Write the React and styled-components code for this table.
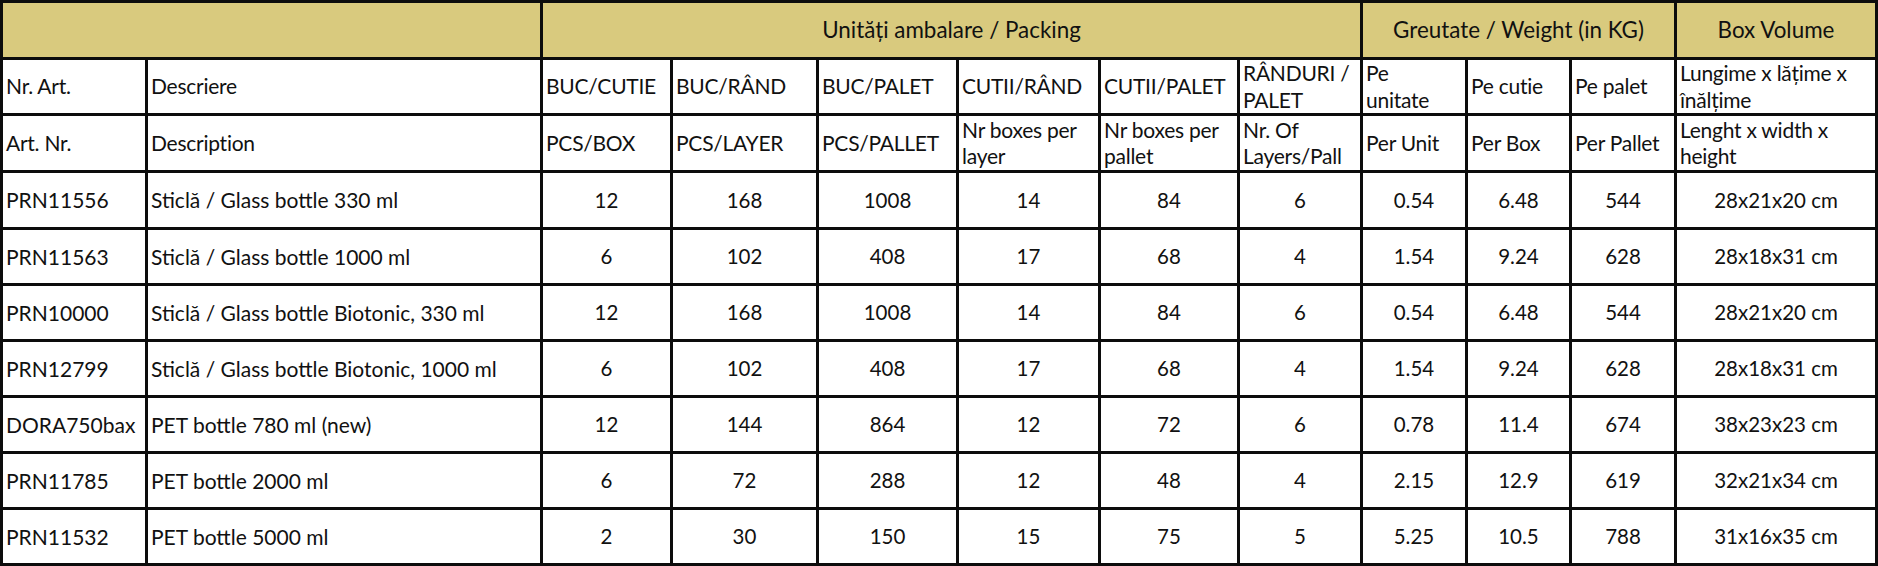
import React from "react";
import styled, { createGlobalStyle } from "styled-components";

const Global = createGlobalStyle`
  html, body { margin: 0; padding: 0; background: #fff; }
  #root { width: 1878px; }
`;

const Sheet = styled.div`
  box-sizing: border-box;
  width: 1878px;
  height: 566px;
  display: grid;
  grid-template-columns: 142px 392px 127px 143px 137px 139px 136px 120px 102px 101px 102px 198px;
  grid-template-rows: 54px 53px 54px 54px 53px 53px 53px 53px 53px 53px;
  gap: 3px;
  padding: 3px;
  background: #0c0c0c;
`;

const Cell = styled.div`
  grid-column: span ${(p) => p.$span || 1};
  background: ${(p) => (p.$band ? "#d9ca7e" : "#ffffff")};
  display: flex;
  align-items: center;
  justify-content: ${(p) => (p.$center ? "center" : "flex-start")};
  text-align: ${(p) => (p.$center ? "center" : "left")};
  padding: 0 ${(p) => (p.$center ? "0" : "3px")};
  overflow: hidden;
  white-space: nowrap;
  color: #111;
  font-family: "Lato", "Liberation Sans", sans-serif;
  font-size: ${(p) => (p.$body ? (p.$center ? "20.5px" : "21px") : "21px")};
  line-height: ${(p) => (p.$body ? 1.2 : 1.24)};
  letter-spacing: ${(p) => (p.$body ? "0" : "-0.25px")};
`;

const GroupCell = styled(Cell).attrs({ $band: true, $center: true })`
  font-size: 22.4px;
  letter-spacing: 0;
`;

const labelsRo = [
  "Nr. Art.",
  "Descriere",
  "BUC/CUTIE",
  "BUC/RÂND",
  "BUC/PALET",
  "CUTII/RÂND",
  "CUTII/PALET",
  ["RÂNDURI /", "PALET"],
  ["Pe", "unitate"],
  "Pe cutie",
  "Pe palet",
  ["Lungime x lățime x", "înălțime"],
];

const labelsEn = [
  "Art. Nr.",
  "Description",
  "PCS/BOX",
  "PCS/LAYER",
  "PCS/PALLET",
  ["Nr boxes per", "layer"],
  ["Nr boxes per", "pallet"],
  ["Nr. Of", "Layers/Pall"],
  "Per Unit",
  "Per Box",
  "Per Pallet",
  ["Lenght x width x", "height"],
];

const rows = [
  ["PRN11556", "Sticlă / Glass bottle 330 ml", "12", "168", "1008", "14", "84", "6", "0.54", "6.48", "544", "28x21x20 cm"],
  ["PRN11563", "Sticlă / Glass bottle 1000 ml", "6", "102", "408", "17", "68", "4", "1.54", "9.24", "628", "28x18x31 cm"],
  ["PRN10000", "Sticlă / Glass bottle Biotonic, 330 ml", "12", "168", "1008", "14", "84", "6", "0.54", "6.48", "544", "28x21x20 cm"],
  ["PRN12799", "Sticlă / Glass bottle Biotonic, 1000 ml", "6", "102", "408", "17", "68", "4", "1.54", "9.24", "628", "28x18x31 cm"],
  ["DORA750bax", "PET bottle 780 ml (new)", "12", "144", "864", "12", "72", "6", "0.78", "11.4", "674", "38x23x23 cm"],
  ["PRN11785", "PET bottle 2000 ml", "6", "72", "288", "12", "48", "4", "2.15", "12.9", "619", "32x21x34 cm"],
  ["PRN11532", "PET bottle 5000 ml", "2", "30", "150", "15", "75", "5", "5.25", "10.5", "788", "31x16x35 cm"],
];

const Label = ({ text }) =>
  Array.isArray(text) ? (
    <span>
      {text[0]}
      <br />
      {text[1]}
    </span>
  ) : (
    <span>{text}</span>
  );

export default function App() {
  return (
    <>
      <Global />
      <Sheet>
        <GroupCell $span={2} />
        <GroupCell $span={6}>Unități ambalare / Packing</GroupCell>
        <GroupCell $span={3}>Greutate / Weight (in KG)</GroupCell>
        <GroupCell>Box Volume</GroupCell>

        {labelsRo.map((t, i) => (
          <Cell key={"ro" + i}>
            <Label text={t} />
          </Cell>
        ))}
        {labelsEn.map((t, i) => (
          <Cell key={"en" + i}>
            <Label text={t} />
          </Cell>
        ))}

        {rows.map((r, ri) =>
          r.map((v, ci) => (
            <Cell key={ri + "-" + ci} $body $center={ci > 1}>
              {v}
            </Cell>
          ))
        )}
      </Sheet>
    </>
  );
}
